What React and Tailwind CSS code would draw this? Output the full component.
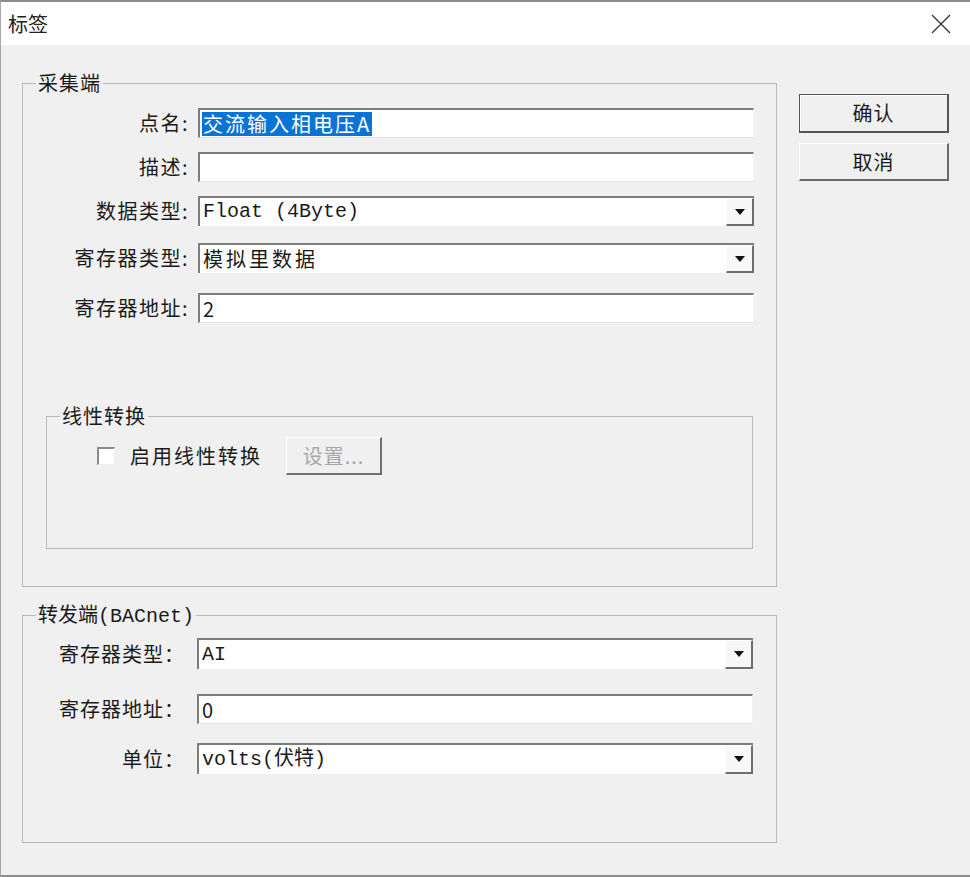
import React from "react";

const cjk = { fontFamily: '"Noto Sans CJK SC", "Noto Sans", sans-serif' };
const mono = { fontFamily: '"Liberation Mono", "Noto Sans CJK SC", monospace' };

function Arrow() {
  return (
    <svg width="10" height="6" viewBox="0 0 10 6">
      <path d="M0 0 H10 L5 6 Z" fill="#111" />
    </svg>
  );
}

function TextBox({ children, h = "h-[30px]" }) {
  return (
    <div
      className={`${h} w-[556px] bg-white border-t-2 border-l-2 border-t-[#7d7d7d] border-l-[#7d7d7d] border-b border-r border-b-[#e6e6e6] border-r-[#f4f4f4] flex items-center pl-[2px] text-[20px] text-[#1a1a1a] overflow-hidden whitespace-nowrap`}
    >
      {children}
    </div>
  );
}

function Combo({ children, h = "h-[30px]", font = mono, track = "" }) {
  return (
    <div
      className={`${h} w-[556px] bg-white border-t-2 border-l-2 border-t-[#7d7d7d] border-l-[#7d7d7d] flex items-stretch text-[20px] text-[#1a1a1a]`}
    >
      <div className={`flex-1 flex items-center pl-[3px] whitespace-nowrap ${track}`} style={font}>
        {children}
      </div>
      <div className="w-[28px] bg-[#f7f7f7] border-t border-l border-white border-r-2 border-b-2 border-r-[#6e6e6e] border-b-[#6e6e6e] flex items-center justify-center">
        <Arrow />
      </div>
    </div>
  );
}

function Row1({ label, mt, children }) {
  return (
    <div className={`flex items-center ${mt}`}>
      <div className="w-[166px] text-right text-[20px] tracking-[1.5px] text-[#1a1a1a] leading-none">
        {label}
      </div>
      <div className="ml-[9px]">{children}</div>
    </div>
  );
}

function Row2({ label, mt, children }) {
  return (
    <div className={`flex items-center ${mt}`}>
      <div className="w-[162px] text-right text-[20px] tracking-[1px] text-[#1a1a1a] leading-none">
        {label}
      </div>
      <div className="ml-[12px]">{children}</div>
    </div>
  );
}

export default function App() {
  return (
    <div
      className="w-[970px] h-[877px] bg-[#f0f0f0] border-t-2 border-t-[#8c8c8c] border-l border-l-[#a6a6a6] border-b-2 border-b-[#8c8c8c] flex flex-col overflow-hidden"
      style={cjk}
    >
      {/* barra de titulo */}
      <div className="h-[43px] bg-white flex items-center justify-between pl-[7px] pr-[19px] shrink-0">
        <span className="text-[20px] text-[#222]">标签</span>
        <svg width="20" height="20" viewBox="0 0 20 20">
          <path d="M1 1 L19 19 M19 1 L1 19" stroke="#333" strokeWidth="1.3" />
        </svg>
      </div>

      <div className="flex pt-[26px]">
        {/* columna izquierda */}
        <div className="ml-[21px] w-[755px] flex flex-col">
          <fieldset className="h-[516px] border border-[#b9b9b9] px-0">
            <legend className="ml-[13px] px-[2px] text-[20px] leading-[24px] tracking-[1px] text-[#1a1a1a]">
              采集端
            </legend>
            <div className="flex flex-col pt-[13px]">
              <Row1 label="点名:" mt="">
                <TextBox>
                  <span className="bg-[#0a74d6] text-white px-[1px] leading-[24px] tracking-[2px]">
                    交流输入相电压A
                  </span>
                </TextBox>
              </Row1>
              <Row1 label="描述:" mt="mt-[14px]">
                <TextBox> </TextBox>
              </Row1>
              <Row1 label="数据类型:" mt="mt-[14px]">
                <Combo>Float (4Byte)</Combo>
              </Row1>
              <Row1 label="寄存器类型:" mt="mt-[17px]">
                <Combo font={cjk} track="tracking-[3px]">模拟里数据</Combo>
              </Row1>
              <Row1 label="寄存器地址:" mt="mt-[20px]">
                <TextBox>
                  <span className="pl-[1px]">2</span>
                </TextBox>
              </Row1>

              <fieldset className="mt-[81px] ml-[23px] w-[707px] h-[145px] border border-[#b9b9b9] px-0">
                <legend className="ml-[13px] px-[2px] text-[20px] leading-[24px] tracking-[1px] text-[#1a1a1a]">
                  线性转换
                </legend>
                <div className="flex items-center pt-[9px] pl-[50px]">
                  <div className="w-[18px] h-[18px] bg-white border-t-2 border-l-2 border-[#8a8a8a] border-b border-r border-b-[#f0f0f0] border-r-[#f0f0f0]" />
                  <span className="ml-[15px] text-[20px] tracking-[2px] text-[#1a1a1a]">
                    启用线性转换
                  </span>
                  <button className="ml-[24px] w-[96px] h-[38px] bg-[#f0f0f0] border-t border-l border-white border-r-2 border-b-2 border-r-[#707070] border-b-[#707070] text-[20px] text-[#a8a8a8] tracking-[1px] flex items-center justify-center">
                    设置...
                  </button>
                </div>
              </fieldset>
            </div>
          </fieldset>

          <fieldset className="mt-[15px] h-[241px] border border-[#b9b9b9] px-0">
            <legend className="ml-[13px] px-[2px] text-[20px] leading-[24px] text-[#1a1a1a]">
              转发端<span style={mono}>(BACnet)</span>
            </legend>
            <div className="flex flex-col pt-[9px]">
              <Row2 label="寄存器类型：" mt="">
                <Combo h="h-[31px]">AI</Combo>
              </Row2>
              <Row2 label="寄存器地址：" mt="mt-[25px]">
                <TextBox>
                  <span className="pl-[1px]">0</span>
                </TextBox>
              </Row2>
              <Row2 label="单位：" mt="mt-[19px]">
                <Combo h="h-[31px]">volts(伏特)</Combo>
              </Row2>
            </div>
          </fieldset>
        </div>

        {/* botones */}
        <div className="ml-[22px] pt-[23px] flex flex-col">
          <button className="w-[150px] h-[39px] bg-[#f0f0f0] border border-[#555] border-r-2 border-b-2 shadow-[inset_1px_1px_0_#ffffff] text-[20px] tracking-[1px] text-[#1a1a1a] flex items-center justify-center">
            确认
          </button>
          <button className="mt-[10px] w-[150px] h-[38px] bg-[#f0f0f0] border-t border-l border-white border-r-2 border-b-2 border-r-[#6b6b6b] border-b-[#6b6b6b] text-[20px] tracking-[1px] text-[#1a1a1a] flex items-center justify-center">
            取消
          </button>
        </div>
      </div>
    </div>
  );
}
